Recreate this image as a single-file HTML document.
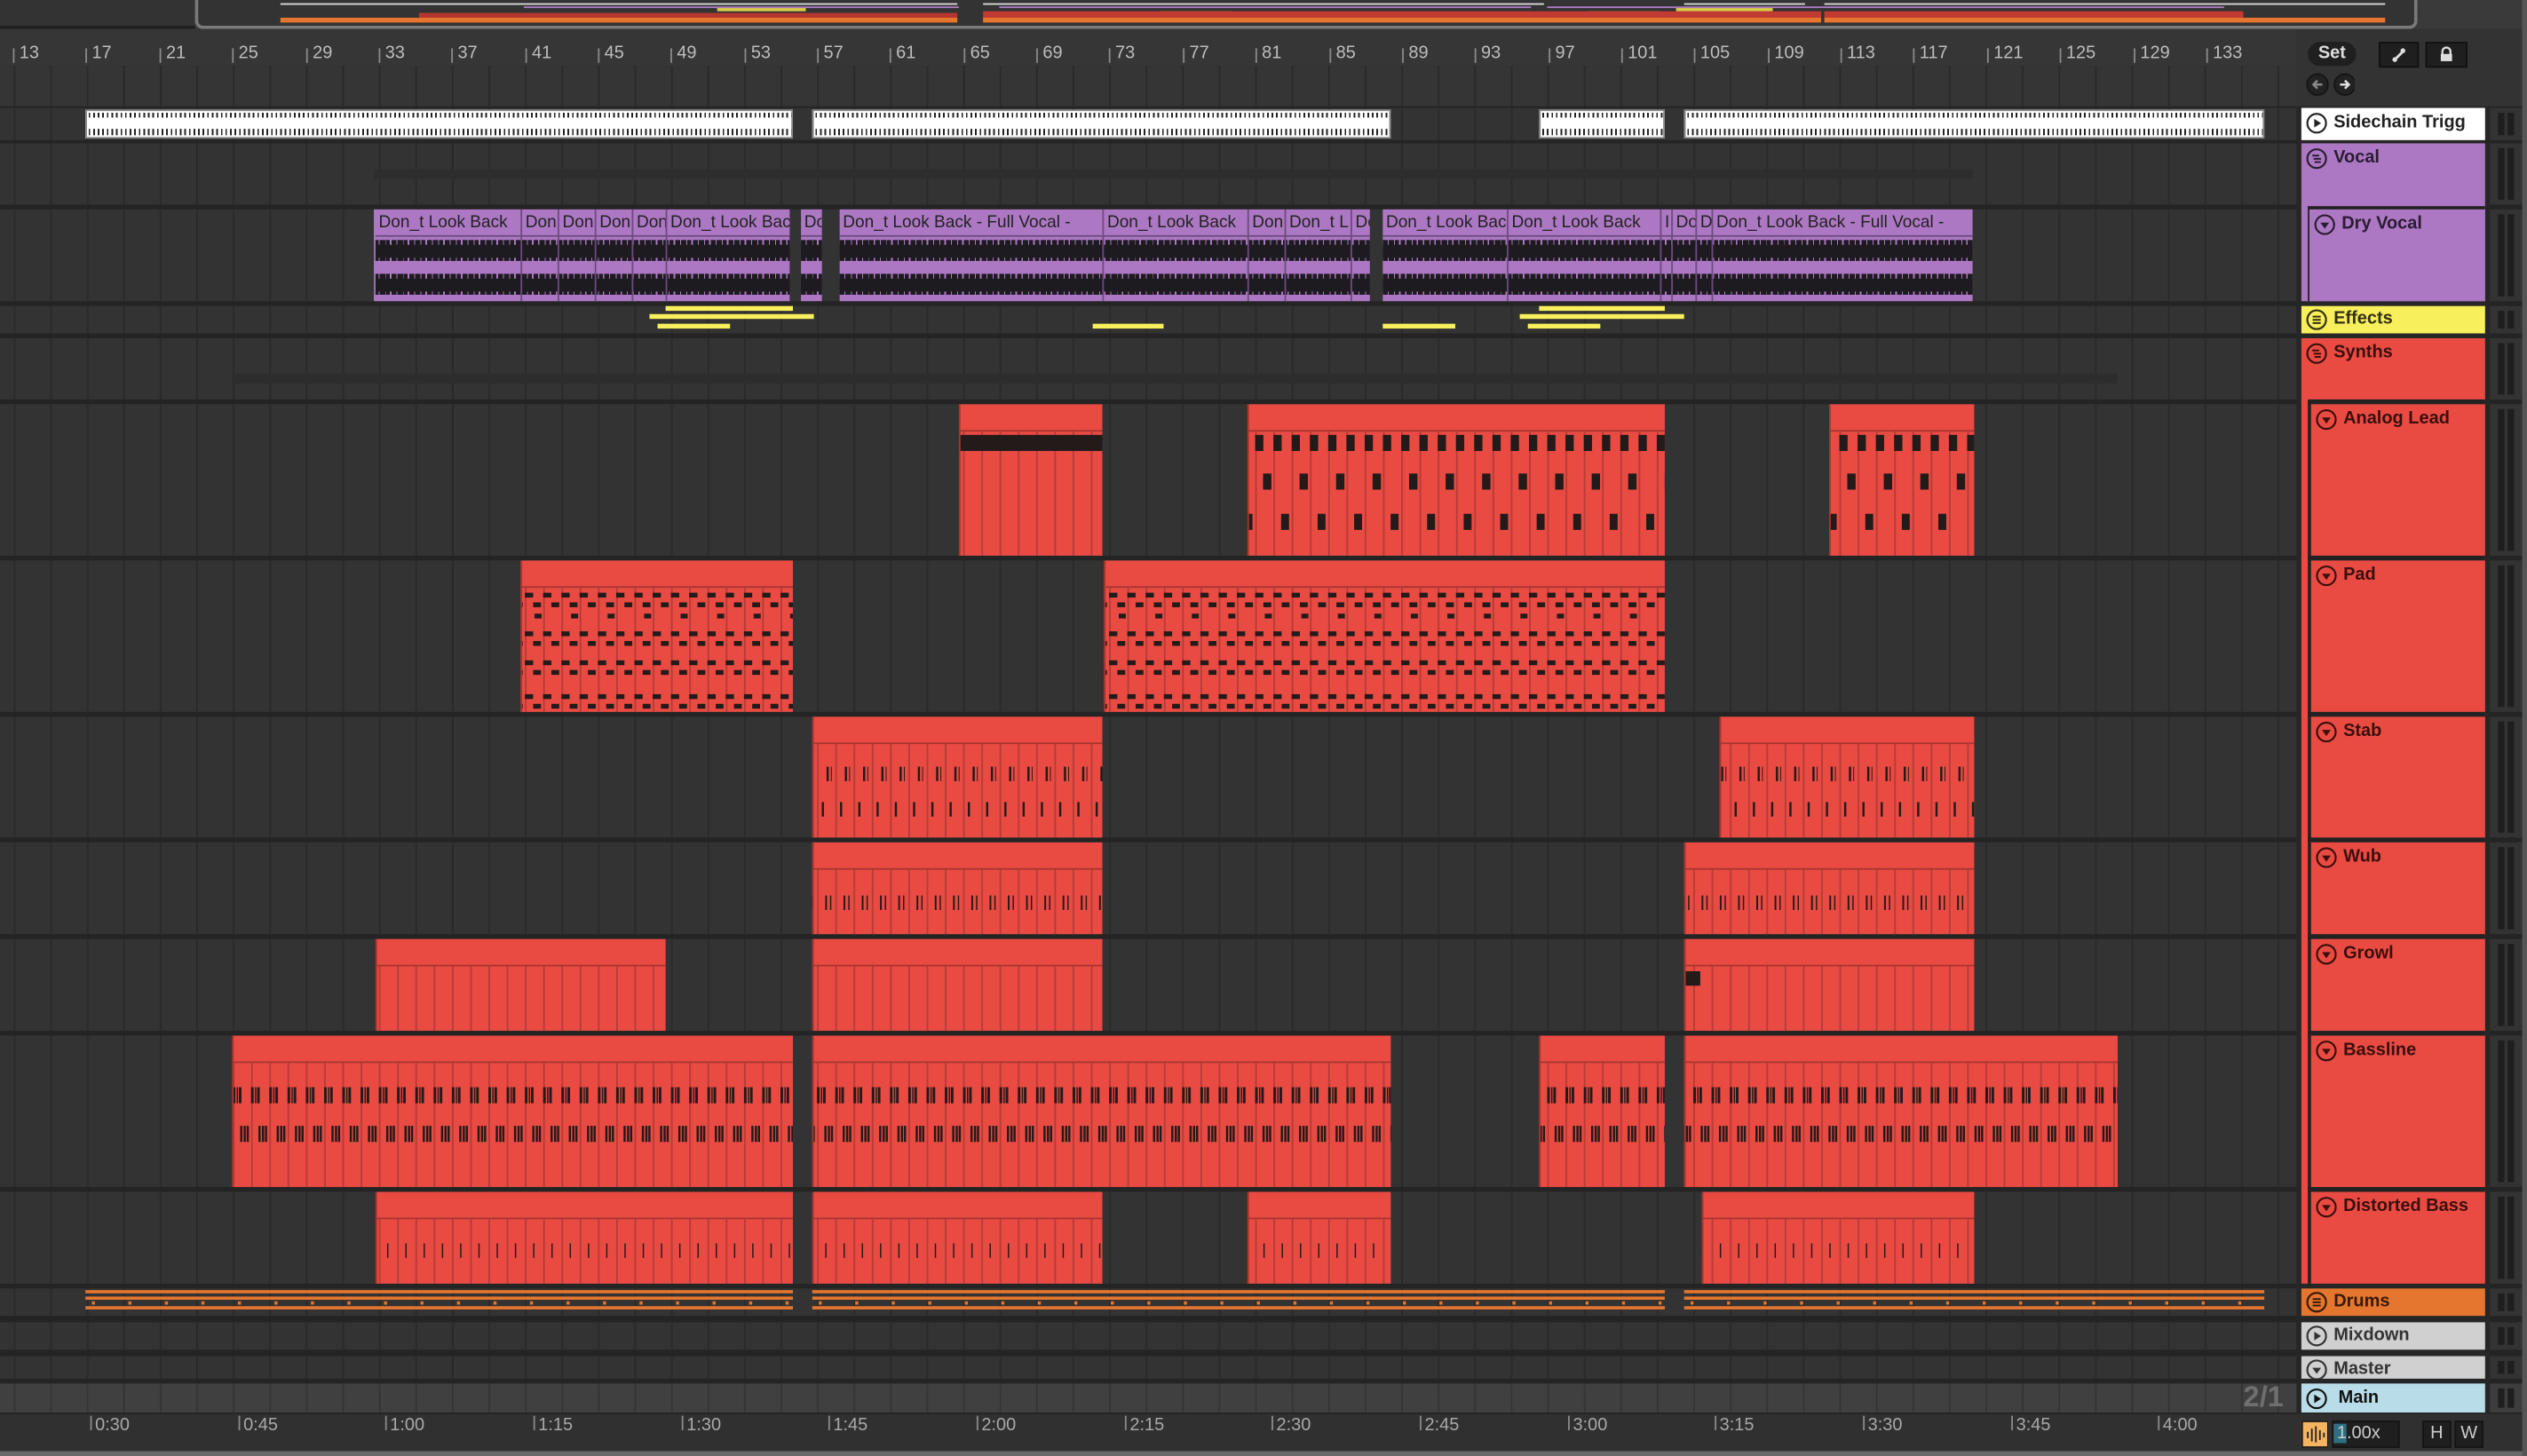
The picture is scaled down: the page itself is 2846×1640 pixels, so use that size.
<!DOCTYPE html>
<html><head><meta charset="utf-8"><style>
html,body{margin:0;padding:0;background:#2b2b2b;}
body{width:2846px;height:1640px;overflow:hidden;font-family:"Liberation Sans",sans-serif;}
#s{position:relative;width:1568px;height:904px;transform:scale(1.81505,1.81416);transform-origin:0 0;background:#242424;overflow:hidden;}
.a{position:absolute;}
.row{position:absolute;left:0;width:1425px;background:#333 linear-gradient(90deg,#2a2a2a 1px,transparent 1px) 8.5px 0/22.667px 100% repeat-x;}
.c{position:absolute;top:0;height:100%;background-color:#e94b43;box-shadow:inset 1px 0 #a8352f;
 --P:calc(8.5px - var(--x));
 --base:linear-gradient(#a8352f,#a8352f) 0 16px/100% 1px no-repeat, linear-gradient(90deg,#b83c36 1px,transparent 1px) var(--P) 17px/11.333px 100% repeat-x;}
.g{background:var(--base);background-color:#e94b43;}
.an1{background:linear-gradient(#231a1a,#231a1a) 0 19px/100% 10px no-repeat,var(--base);background-color:#e94b43;}
.an2{background:
 linear-gradient(90deg,#231a1a 5px,transparent 5px) var(--P) 19px/11.333px 10px repeat-x,
 linear-gradient(90deg,transparent 5px,#231a1a 5px 10px,transparent 10px) var(--P) 43px/22.667px 10px repeat-x,
 linear-gradient(90deg,transparent 16px,#231a1a 16px 21px,transparent 21px) var(--P) 68px/22.667px 10px repeat-x,
 var(--base);background-color:#e94b43;}
.pad{--A:linear-gradient(90deg,#231a1a 5px,transparent 5px);--B:linear-gradient(90deg,transparent 5px,#231a1a 5px 10px,transparent 10px);
 background:var(--A) var(--P) 20px/11.333px 3px repeat-x,var(--B) var(--P) 26px/11.333px 3px repeat-x,
 linear-gradient(90deg,transparent 6px,#231a1a 6px 10.5px,transparent 10.5px) var(--P) 33px/22.667px 3px repeat-x,
 var(--A) var(--P) 44px/11.333px 3px repeat-x,var(--B) var(--P) 50px/11.333px 3px repeat-x,
 var(--A) var(--P) 62px/11.333px 3px repeat-x,var(--B) var(--P) 68px/11.333px 3px repeat-x,
 var(--A) var(--P) 83px/11.333px 3px repeat-x,var(--B) var(--P) 89px/11.333px 3px repeat-x,
 var(--base);background-color:#e94b43;}
.stab{background:linear-gradient(90deg,transparent 6px,#231a1a 6px 7.3px,transparent 7.3px 8.5px,#231a1a 8.5px 9.3px,transparent 9.3px) var(--P) 31px/11.333px 9px repeat-x,
 linear-gradient(90deg,transparent 3px,#231a1a 3px 4.3px,transparent 4.3px) var(--P) 53px/11.333px 9px repeat-x,var(--base);background-color:#e94b43;}
.wub{background:linear-gradient(90deg,transparent 5px,#231a1a 5px 6.3px,transparent 6.3px 8px,#231a1a 8px 8.8px,transparent 8.8px) var(--P) 33px/11.333px 9px repeat-x,var(--base);background-color:#e94b43;}
.bas{background:linear-gradient(90deg,#231a1a 0 1.5px,transparent 1.5px 2.4px,#231a1a 2.4px 3.2px,transparent 3.2px 3.8px,#231a1a 3.8px 5.5px,transparent 5.5px) var(--P) 32px/11.333px 10px repeat-x,
 linear-gradient(90deg,transparent 4.5px,#231a1a 4.5px 6px,transparent 6px 6.8px,#231a1a 6.8px 8px,transparent 8px 8.5px,#231a1a 8.5px 10px,transparent 10px) var(--P) 56px/11.333px 10px repeat-x,var(--base);background-color:#e94b43;}
.dis{background:linear-gradient(90deg,transparent 5px,#231a1a 5px 6px,transparent 6px) var(--P) 32px/11.333px 9px repeat-x,var(--base);background-color:#e94b43;}
.sc{position:absolute;top:1px;height:18px;background:#fff;box-shadow:inset 0 0 0 1px #8a8a8a;
 background-image:repeating-linear-gradient(90deg,#222 0 1px,transparent 1px 2.83px),repeating-linear-gradient(90deg,#222 0 1px,transparent 1px 2.83px);
 background-size:100% 3px,100% 4px;background-position:2px 2px,2px 12px;background-repeat:no-repeat;}
.dv{position:absolute;top:0;height:100%;background-color:#ad78c3;overflow:hidden;
 background-image:
 repeating-linear-gradient(90deg,#1d1a20 0 3px,transparent 3px 3.6px,#1d1a20 3.6px 7px,transparent 7px 7.5px,#1d1a20 7.5px 10px,transparent 10px 11px),
 linear-gradient(#1d1a20,#1d1a20),
 repeating-linear-gradient(90deg,#1d1a20 0 3px,transparent 3px 3.6px,#1d1a20 3.6px 7px,transparent 7px 7.5px,#1d1a20 7.5px 10px,transparent 10px 11px),
 linear-gradient(#1d1a20,#1d1a20),
 linear-gradient(#6e4a80,#6e4a80);
 background-size:100% 13px,100% 8px,100% 13px,100% 8px,100% 1px;
 background-position:0 19px,0 21.5px,0 40px,0 42.5px,0 16px;background-repeat:no-repeat;}
.sg{position:absolute;top:0;height:100%;border-left:1px solid #6e4a80;box-sizing:border-box;overflow:hidden;white-space:nowrap;font-size:10.5px;color:#222;padding:2px 0 0 2px;line-height:12px;}
.y{position:absolute;height:3px;background:#f8ef5c;}
.dr{position:absolute;top:0;height:100%;background:
 linear-gradient(#e4762f,#e4762f) 0 1px/100% 2px no-repeat,
 linear-gradient(#e4762f,#e4762f) 0 5px/100% 2px no-repeat,
 linear-gradient(90deg,#e4762f 2px,transparent 2px) 4px 8px/22.667px 2px repeat-x,
 linear-gradient(#e4762f,#e4762f) 0 11px/100% 2px no-repeat;}
.rl{position:absolute;top:27px;font-size:11px;color:#bdbdbd;}
.rt{position:absolute;top:30px;width:1px;height:9px;background:#8a8a8a;}
.bl{position:absolute;top:879px;font-size:11px;color:#a8a8a8;}
.bt{position:absolute;top:879px;width:1px;height:9px;background:#8a8a8a;}
.h{position:absolute;left:1428px;width:114px;box-sizing:border-box;font-size:11px;font-weight:bold;color:#222;white-space:nowrap;overflow:hidden;}
.h svg{position:absolute;left:3px;top:3px;}
.h span{position:absolute;left:20px;top:3px;line-height:13px;}
.m{position:absolute;left:1545px;width:23px;background:#333;}
.m::before,.m::after{content:"";position:absolute;top:3px;bottom:3px;width:4px;background:#1e1e1e;left:5px;}
.m::after{left:11px;}
.ov{position:absolute;height:2px;}
</style></head><body><div id="s">

<div class="a" style="left:0;top:0;width:1568px;height:18px;background:#3a3a3a"></div>
<div class="a" style="left:0;top:0;width:121px;height:16px;background:#333;border-bottom:2px solid #202020"></div>
<div class="a" style="left:121px;top:-4px;width:1375px;height:18px;border:2px solid #7a7a7a;border-radius:5px;background:#333"></div>
<div class="ov" style="left:174px;top:2px;width:420px;height:1px;background:#ddd"></div>
<div class="ov" style="left:610px;top:2px;width:348px;height:1px;background:#ddd"></div>
<div class="ov" style="left:1045px;top:2px;width:75px;height:1px;background:#ddd"></div>
<div class="ov" style="left:1132px;top:2px;width:348px;height:1px;background:#ddd"></div>
<div class="ov" style="left:325px;top:4px;width:270px;height:1px;background:#b07cc6"></div>
<div class="ov" style="left:620px;top:4px;width:330px;height:1px;background:#b07cc6"></div>
<div class="ov" style="left:960px;top:4px;width:420px;height:1px;background:#b07cc6"></div>
<div class="ov" style="left:445px;top:5px;width:55px;height:2px;background:#d9cc4a"></div>
<div class="ov" style="left:720px;top:7px;width:45px;height:2px;background:#d9cc4a"></div>
<div class="ov" style="left:985px;top:7px;width:45px;height:2px;background:#d9cc4a"></div>
<div class="ov" style="left:1040px;top:5px;width:60px;height:2px;background:#d9cc4a"></div>
<div class="ov" style="left:260px;top:8px;width:334px;height:4px;background:#b5362f"></div>
<div class="ov" style="left:610px;top:7px;width:520px;height:5px;background:#c23b33"></div>
<div class="ov" style="left:1132px;top:7px;width:260px;height:5px;background:#c23b33"></div>
<div class="ov" style="left:174px;top:10.5px;width:420px;height:3px;background:#e4762f"></div>
<div class="ov" style="left:610px;top:10.5px;width:520px;height:3px;background:#e4762f"></div>
<div class="ov" style="left:1132px;top:10.5px;width:348px;height:3px;background:#e4762f"></div>

<div class="a" style="left:0;top:18px;width:1425px;height:23px;background:#363636"></div>
<div class="row" style="top:41px;height:25px;background-color:#353535"></div>
<div class="rt" style="left:8px"></div><div class="rl" style="left:12px">13</div>
<div class="rt" style="left:53px"></div><div class="rl" style="left:57px">17</div>
<div class="rt" style="left:99px"></div><div class="rl" style="left:103px">21</div>
<div class="rt" style="left:144px"></div><div class="rl" style="left:148px">25</div>
<div class="rt" style="left:190px"></div><div class="rl" style="left:194px">29</div>
<div class="rt" style="left:235px"></div><div class="rl" style="left:239px">33</div>
<div class="rt" style="left:280px"></div><div class="rl" style="left:284px">37</div>
<div class="rt" style="left:326px"></div><div class="rl" style="left:330px">41</div>
<div class="rt" style="left:371px"></div><div class="rl" style="left:375px">45</div>
<div class="rt" style="left:416px"></div><div class="rl" style="left:420px">49</div>
<div class="rt" style="left:462px"></div><div class="rl" style="left:466px">53</div>
<div class="rt" style="left:507px"></div><div class="rl" style="left:511px">57</div>
<div class="rt" style="left:552px"></div><div class="rl" style="left:556px">61</div>
<div class="rt" style="left:598px"></div><div class="rl" style="left:602px">65</div>
<div class="rt" style="left:643px"></div><div class="rl" style="left:647px">69</div>
<div class="rt" style="left:688px"></div><div class="rl" style="left:692px">73</div>
<div class="rt" style="left:734px"></div><div class="rl" style="left:738px">77</div>
<div class="rt" style="left:779px"></div><div class="rl" style="left:783px">81</div>
<div class="rt" style="left:825px"></div><div class="rl" style="left:829px">85</div>
<div class="rt" style="left:870px"></div><div class="rl" style="left:874px">89</div>
<div class="rt" style="left:915px"></div><div class="rl" style="left:919px">93</div>
<div class="rt" style="left:961px"></div><div class="rl" style="left:965px">97</div>
<div class="rt" style="left:1006px"></div><div class="rl" style="left:1010px">101</div>
<div class="rt" style="left:1051px"></div><div class="rl" style="left:1055px">105</div>
<div class="rt" style="left:1097px"></div><div class="rl" style="left:1101px">109</div>
<div class="rt" style="left:1142px"></div><div class="rl" style="left:1146px">113</div>
<div class="rt" style="left:1187px"></div><div class="rl" style="left:1191px">117</div>
<div class="rt" style="left:1233px"></div><div class="rl" style="left:1237px">121</div>
<div class="rt" style="left:1278px"></div><div class="rl" style="left:1282px">125</div>
<div class="rt" style="left:1324px"></div><div class="rl" style="left:1328px">129</div>
<div class="rt" style="left:1369px"></div><div class="rl" style="left:1373px">133</div>

<div class="a" style="left:1425px;top:18px;width:143px;height:48px;background:#333"></div>
<div class="a" style="left:1432px;top:26px;width:30px;height:15px;border-radius:8px;background:#1f1f1f;color:#ddd;font-size:11px;font-weight:bold;text-align:center;line-height:15px">Set</div>
<div class="a" style="left:1476px;top:26px;width:23px;height:14px;background:#1f1f1f;border:1px solid #111"><svg width="23" height="14"><path d="M9 10L14 5" stroke="#ddd" stroke-width="1.6"/><circle cx="9" cy="10" r="1.5" fill="#ddd"/><circle cx="14" cy="4.5" r="1.5" fill="#ddd"/></svg></div>
<div class="a" style="left:1505px;top:26px;width:24px;height:14px;background:#1f1f1f;border:1px solid #111"><svg width="24" height="14"><path d="M9.5 7V5a2.5 2.5 0 0 1 5 0v2" stroke="#ddd" fill="none" stroke-width="1.3"/><rect x="8.5" y="6.5" width="7" height="4.5" fill="#ddd"/></svg></div>
<svg class="a" style="left:1431px;top:45px" width="30" height="15"><circle cx="7" cy="7.5" r="6.5" fill="#222" stroke="#151515"/><path d="M10 7.5H5M7 5l-2.5 2.5L7 10" stroke="#888" fill="none" stroke-width="1.4"/><circle cx="24" cy="7.5" r="6.5" fill="#222" stroke="#151515"/><path d="M21 7.5h5M24 5l2.5 2.5L24 10" stroke="#ddd" fill="none" stroke-width="1.4"/></svg>

<div class="row" style="top:67px;height:20px">
 <div class="sc" style="left:53px;width:439px"></div><div class="sc" style="left:504px;width:359px"></div><div class="sc" style="left:955px;width:78px"></div><div class="sc" style="left:1045px;width:360px"></div>
</div>
<div class="row" style="top:89px;height:38px">
 <div class="a" style="left:232px;top:16px;width:992px;height:6px;background:#2d2d2d"></div>
</div>
<div class="row" style="top:130px;height:57px">
 <div class="dv" style="left:232px;width:258px">
  <div class="sg" style="left:0;width:91px;border-left-color:#ad78c3">Don_t Look Back</div>
  <div class="sg" style="left:91px;width:23px">Don</div>
  <div class="sg" style="left:114px;width:23px">Don</div>
  <div class="sg" style="left:137px;width:23px">Don</div>
  <div class="sg" style="left:160px;width:21px">Don</div>
  <div class="sg" style="left:181px;width:77px">Don_t Look Back</div>
 </div>
 <div class="dv" style="left:497px;width:13px"><div class="sg" style="left:0;width:13px;border:0">Do</div></div>
 <div class="dv" style="left:521px;width:329px">
  <div class="sg" style="left:0;width:163px;border:0">Don_t Look Back - Full Vocal -</div>
  <div class="sg" style="left:163px;width:90px">Don_t Look Back</div>
  <div class="sg" style="left:253px;width:23px">Don</div>
  <div class="sg" style="left:276px;width:41px">Don_t L</div>
  <div class="sg" style="left:317px;width:12px">Do</div>
 </div>
 <div class="dv" style="left:858px;width:366px">
  <div class="sg" style="left:0;width:77px;border:0">Don_t Look Back</div>
  <div class="sg" style="left:77px;width:95px">Don_t Look Back</div>
  <div class="sg" style="left:172px;width:7px">I</div>
  <div class="sg" style="left:179px;width:15px">Do</div>
  <div class="sg" style="left:194px;width:10px">D</div>
  <div class="sg" style="left:204px;width:162px">Don_t Look Back - Full Vocal -</div>
 </div>
</div>
<div class="row" style="top:190px;height:17px">
 <div class="y" style="left:413px;top:0;width:79px"></div>
 <div class="y" style="left:403px;top:5px;width:102px"></div>
 <div class="y" style="left:408px;top:11px;width:45px"></div>
 <div class="y" style="left:678px;top:11px;width:44px"></div>
 <div class="y" style="left:858px;top:11px;width:45px"></div>
 <div class="y" style="left:955px;top:0;width:78px"></div>
 <div class="y" style="left:943px;top:5px;width:102px"></div>
 <div class="y" style="left:948px;top:11px;width:45px"></div>
</div>
<div class="row" style="top:210px;height:38px">
 <div class="a" style="left:144px;top:22px;width:1170px;height:6px;background:#2d2d2d"></div>
</div>
<div class="row" style="top:251px;height:94px">
 <div class="c an1" style="--x:595px;left:595px;width:89px"></div>
 <div class="c an2" style="--x:774px;left:774px;width:259px"></div>
 <div class="c an2" style="--x:1135px;left:1135px;width:90px"></div>
</div>
<div class="row" style="top:348px;height:94px">
 <div class="c pad" style="--x:323px;left:323px;width:169px"></div>
 <div class="c pad" style="--x:685px;left:685px;width:348px"></div>
</div>
<div class="row" style="top:445px;height:75px">
 <div class="c stab" style="--x:504px;left:504px;width:180px"></div>
 <div class="c stab" style="--x:1067px;left:1067px;width:158px"></div>
</div>
<div class="row" style="top:523px;height:57px">
 <div class="c wub" style="--x:504px;left:504px;width:180px"></div>
 <div class="c wub" style="--x:1045px;left:1045px;width:180px"></div>
</div>
<div class="row" style="top:583px;height:57px">
 <div class="c g" style="--x:233px;left:233px;width:180px"></div>
 <div class="c g" style="--x:504px;left:504px;width:180px"></div>
 <div class="c g" style="--x:1045px;left:1045px;width:180px"></div>
 <div class="a" style="left:1046px;top:20px;width:9px;height:9px;background:#231a1a"></div>
</div>
<div class="row" style="top:643px;height:94px">
 <div class="c bas" style="--x:144px;left:144px;width:348px"></div>
 <div class="c bas" style="--x:504px;left:504px;width:359px"></div>
 <div class="c bas" style="--x:955px;left:955px;width:78px"></div>
 <div class="c bas" style="--x:1045px;left:1045px;width:269px"></div>
</div>
<div class="row" style="top:740px;height:57px">
 <div class="c dis" style="--x:233px;left:233px;width:259px"></div>
 <div class="c dis" style="--x:504px;left:504px;width:180px"></div>
 <div class="c dis" style="--x:774px;left:774px;width:89px"></div>
 <div class="c dis" style="--x:1056px;left:1056px;width:169px"></div>
</div>
<div class="row" style="top:800px;height:17px">
 <div class="dr" style="left:53px;width:439px"></div>
 <div class="dr" style="left:504px;width:529px"></div>
 <div class="dr" style="left:1045px;width:360px"></div>
</div>
<div class="row" style="top:821px;height:17px"></div>
<div class="row" style="top:842px;height:14px"></div>
<div class="row" style="top:859px;height:18px;background-color:#404040;background-image:linear-gradient(90deg,#353535 1px,transparent 1px)"></div>
<div class="a" style="left:1392px;top:857px;font-size:18px;font-weight:bold;color:#6f6f6f">2/1</div>

<div class="a" style="left:1425px;top:66px;width:120px;height:812px;background:#262626"></div>
<div class="h" style="top:67px;height:20px;background:#fff"><svg width="13" height="13"><circle cx="6.5" cy="6.5" r="5.8" fill="none" stroke="#222" stroke-width="1.2"/><path d="M5 3.8v5.4l4.2-2.7z" fill="#222"/></svg><span>Sidechain Trigg</span></div>
<div class="h" style="top:89px;height:98px;background:#ad78c3;color:#2a1c33"><svg width="13" height="13"><circle cx="6.5" cy="6.5" r="5.8" fill="none" stroke="#2a1c33" stroke-width="1.2"/><path d="M3.8 4.6h4.2M4.6 6.6h4.6M5.2 8.6h3.8" stroke="#2a1c33" stroke-width="1.1"/></svg><span>Vocal</span></div>
<div class="h" style="top:128px;left:1432px;width:110px;height:59px;background:#ad78c3;border-left:1.5px solid #222;border-top:2px solid #222;color:#2a1c33"><svg width="13" height="13"><circle cx="6.5" cy="6.5" r="5.8" fill="none" stroke="#2a1c33" stroke-width="1.2"/><path d="M3.8 5.2h5.4l-2.7 3.8z" fill="#2a1c33"/></svg><span>Dry Vocal</span></div>
<div class="h" style="top:190px;height:17px;background:#f8ef5c;color:#333010"><svg width="13" height="13" style="top:2px"><circle cx="6.5" cy="6.5" r="5.8" fill="none" stroke="#333010" stroke-width="1.2"/><path d="M4 4.6h5M4 6.6h5M4 8.6h5" stroke="#333010" stroke-width="1.1"/></svg><span style="top:2px">Effects</span></div>
<div class="h" style="top:210px;height:587px;background:#e94b43;color:#3a0f0c"><svg width="13" height="13"><circle cx="6.5" cy="6.5" r="5.8" fill="none" stroke="#3a0f0c" stroke-width="1.2"/><path d="M3.8 4.6h4.2M4.6 6.6h4.6M5.2 8.6h3.8" stroke="#3a0f0c" stroke-width="1.1"/></svg><span>Synths</span></div>
<div class="a" style="left:1432px;top:248px;width:110px;height:3px;background:#222"></div>
<div class="a" style="left:1432px;top:250px;width:1.5px;height:547px;background:#222"></div>
<div class="a" style="left:1432px;top:345px;width:110px;height:3px;background:#222"></div>
<div class="a" style="left:1432px;top:442px;width:110px;height:3px;background:#222"></div>
<div class="a" style="left:1432px;top:520px;width:110px;height:3px;background:#222"></div>
<div class="a" style="left:1432px;top:580px;width:110px;height:3px;background:#222"></div>
<div class="a" style="left:1432px;top:640px;width:110px;height:3px;background:#222"></div>
<div class="a" style="left:1432px;top:737px;width:110px;height:3px;background:#222"></div>
<div class="h" style="top:251px;left:1434px;width:108px;height:20px;color:#3a0f0c"><svg width="13" height="13"><circle cx="6.5" cy="6.5" r="5.8" fill="none" stroke="#3a0f0c" stroke-width="1.2"/><path d="M3.8 5.2h5.4l-2.7 3.8z" fill="#3a0f0c"/></svg><span>Analog Lead</span></div>
<div class="h" style="top:348px;left:1434px;width:108px;height:20px;color:#3a0f0c"><svg width="13" height="13"><circle cx="6.5" cy="6.5" r="5.8" fill="none" stroke="#3a0f0c" stroke-width="1.2"/><path d="M3.8 5.2h5.4l-2.7 3.8z" fill="#3a0f0c"/></svg><span>Pad</span></div>
<div class="h" style="top:445px;left:1434px;width:108px;height:20px;color:#3a0f0c"><svg width="13" height="13"><circle cx="6.5" cy="6.5" r="5.8" fill="none" stroke="#3a0f0c" stroke-width="1.2"/><path d="M3.8 5.2h5.4l-2.7 3.8z" fill="#3a0f0c"/></svg><span>Stab</span></div>
<div class="h" style="top:523px;left:1434px;width:108px;height:20px;color:#3a0f0c"><svg width="13" height="13"><circle cx="6.5" cy="6.5" r="5.8" fill="none" stroke="#3a0f0c" stroke-width="1.2"/><path d="M3.8 5.2h5.4l-2.7 3.8z" fill="#3a0f0c"/></svg><span>Wub</span></div>
<div class="h" style="top:583px;left:1434px;width:108px;height:20px;color:#3a0f0c"><svg width="13" height="13"><circle cx="6.5" cy="6.5" r="5.8" fill="none" stroke="#3a0f0c" stroke-width="1.2"/><path d="M3.8 5.2h5.4l-2.7 3.8z" fill="#3a0f0c"/></svg><span>Growl</span></div>
<div class="h" style="top:643px;left:1434px;width:108px;height:20px;color:#3a0f0c"><svg width="13" height="13"><circle cx="6.5" cy="6.5" r="5.8" fill="none" stroke="#3a0f0c" stroke-width="1.2"/><path d="M3.8 5.2h5.4l-2.7 3.8z" fill="#3a0f0c"/></svg><span>Bassline</span></div>
<div class="h" style="top:740px;left:1434px;width:108px;height:20px;color:#3a0f0c"><svg width="13" height="13"><circle cx="6.5" cy="6.5" r="5.8" fill="none" stroke="#3a0f0c" stroke-width="1.2"/><path d="M3.8 5.2h5.4l-2.7 3.8z" fill="#3a0f0c"/></svg><span>Distorted Bass</span></div>
<div class="h" style="top:800px;height:17px;background:#e4762f;color:#3a1a05"><svg width="13" height="13" style="top:2px"><circle cx="6.5" cy="6.5" r="5.8" fill="none" stroke="#3a1a05" stroke-width="1.2"/><path d="M4 4.6h5M4 6.6h5M4 8.6h5" stroke="#3a1a05" stroke-width="1.1"/></svg><span style="top:2px">Drums</span></div>
<div class="h" style="top:821px;height:17px;background:#d0d0d0;color:#333"><svg width="13" height="13" style="top:2px"><circle cx="6.5" cy="6.5" r="5.8" fill="none" stroke="#333" stroke-width="1.2"/><path d="M5 3.8v5.4l4.2-2.7z" fill="#333"/></svg><span style="top:2px">Mixdown</span></div>
<div class="h" style="top:842px;height:14px;background:#d0d0d0;color:#333"><svg width="13" height="13" style="top:2px"><circle cx="6.5" cy="6.5" r="5.8" fill="none" stroke="#333" stroke-width="1.2"/><path d="M3.8 5.2h5.4l-2.7 3.8z" fill="#333"/></svg><span style="top:2px">Master</span></div>
<div class="h" style="top:859px;height:18px;background:#b9dde8;color:#111"><svg width="13" height="13" style="top:2.5px"><circle cx="6.5" cy="6.5" r="5.8" fill="none" stroke="#111" stroke-width="1.2"/><path d="M5 3.8v5.4l4.2-2.7z" fill="#111"/></svg><span style="top:2.5px;left:23px">Main</span></div>

<div class="m" style="top:67px;height:20px"></div>
<div class="m" style="top:89px;height:38px"></div>
<div class="m" style="top:130px;height:57px"></div>
<div class="m" style="top:190px;height:17px"></div>
<div class="m" style="top:210px;height:38px"></div>
<div class="m" style="top:251px;height:94px"></div>
<div class="m" style="top:348px;height:94px"></div>
<div class="m" style="top:445px;height:75px"></div>
<div class="m" style="top:523px;height:57px"></div>
<div class="m" style="top:583px;height:57px"></div>
<div class="m" style="top:643px;height:94px"></div>
<div class="m" style="top:740px;height:57px"></div>
<div class="m" style="top:800px;height:17px"></div>
<div class="m" style="top:821px;height:17px"></div>
<div class="m" style="top:842px;height:14px"></div>
<div class="m" style="top:859px;height:18px;background:#3d3d3d"></div>

<div class="a" style="left:0;top:878px;width:1568px;height:26px;background:#303030"></div>
<div class="a" style="left:0;top:901px;width:1568px;height:3px;background:#6a6a6a"></div>
<div class="a" style="left:1565px;top:0;width:3px;height:904px;background:#555"></div>
<div class="bt" style="left:56px"></div><div class="bl" style="left:59px">0:30</div>
<div class="bt" style="left:148px"></div><div class="bl" style="left:151px">0:45</div>
<div class="bt" style="left:239px"></div><div class="bl" style="left:242px">1:00</div>
<div class="bt" style="left:331px"></div><div class="bl" style="left:334px">1:15</div>
<div class="bt" style="left:423px"></div><div class="bl" style="left:426px">1:30</div>
<div class="bt" style="left:514px"></div><div class="bl" style="left:517px">1:45</div>
<div class="bt" style="left:606px"></div><div class="bl" style="left:609px">2:00</div>
<div class="bt" style="left:698px"></div><div class="bl" style="left:701px">2:15</div>
<div class="bt" style="left:789px"></div><div class="bl" style="left:792px">2:30</div>
<div class="bt" style="left:881px"></div><div class="bl" style="left:884px">2:45</div>
<div class="bt" style="left:973px"></div><div class="bl" style="left:976px">3:00</div>
<div class="bt" style="left:1064px"></div><div class="bl" style="left:1067px">3:15</div>
<div class="bt" style="left:1156px"></div><div class="bl" style="left:1159px">3:30</div>
<div class="bt" style="left:1248px"></div><div class="bl" style="left:1251px">3:45</div>
<div class="bt" style="left:1339px"></div><div class="bl" style="left:1342px">4:00</div>
<div class="a" style="left:1428px;top:882px;width:15px;height:15px;background:#f4b460;border:1px solid #1a1a1a"><svg width="15" height="15"><path d="M3 6v4M5.5 4v8M8 2.5v10M10.5 5v6M13 6.5v3" stroke="#222" stroke-width="1"/></svg></div>
<div class="a" style="left:1447px;top:882px;width:40px;height:15px;background:#1f1f1f;border:1px solid #151515;font-size:11px;color:#ccc;line-height:15px"><span style="background:#2f6f82;padding:0 0 0 2px">1</span>.00x</div>
<div class="a" style="left:1503px;top:882px;width:16px;height:15px;background:#1f1f1f;border:1px solid #151515;font-size:11px;color:#ccc;text-align:center;line-height:15px">H</div>
<div class="a" style="left:1523px;top:882px;width:16px;height:15px;background:#1f1f1f;border:1px solid #151515;font-size:11px;color:#ccc;text-align:center;line-height:15px">W</div>
</div></body></html>
